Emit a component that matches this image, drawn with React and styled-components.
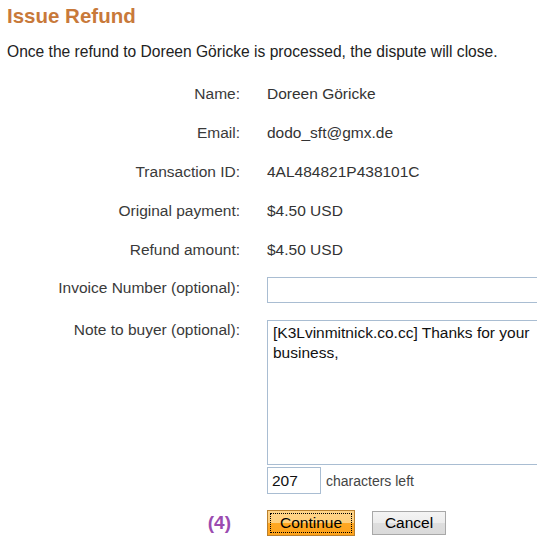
import React from "react";
import styled, { createGlobalStyle } from "styled-components";

const Global = createGlobalStyle`
  html, body { margin: 0; padding: 0; overflow: hidden; background: #fff; }
  body { font-family: "Liberation Sans", Arial, sans-serif; }
`;

const Page = styled.div`
  padding: 4px 7px 0 7px;
  width: 537px;
  box-sizing: border-box;
  overflow: hidden;
`;

const Title = styled.h1`
  margin: 0;
  font-size: 20.5px;
  line-height: 24px;
  font-weight: bold;
  color: #c8793a;
`;

const Intro = styled.p`
  margin: 14px 0 0 0;
  font-size: 15.6px;
  line-height: 20px;
  color: #222;
  white-space: nowrap;
`;

const Form = styled.div`
  margin-top: 22px;
  display: flex;
  flex-direction: column;
  gap: 19px;
`;

const Row = styled.div`
  display: grid;
  grid-template-columns: 233px minmax(0, 1fr);
  column-gap: 27px;
  align-items: start;
  margin-top: ${(p) => p.$shift || 0}px;
`;

const Label = styled.div`
  text-align: right;
  font-size: 15.5px;
  line-height: 20px;
  color: #3a3a3a;
  white-space: nowrap;
  padding-top: ${(p) => p.$pt || 0}px;
  padding-right: ${(p) => p.$pr || 0}px;
`;

const Value = styled.div`
  font-size: 15.5px;
  line-height: 20px;
  color: #333;
  white-space: nowrap;
`;

const Step = styled.span`
  font-size: 19px;
  font-weight: bold;
  color: #9b4bb0;
  line-height: 20px;
`;

const TextInput = styled.input`
  display: block;
  box-sizing: border-box;
  width: 310px;
  height: 26px;
  border: 1px solid #a9bdd2;
  padding: 2px 5px;
  font-family: inherit;
  font-size: 15.5px;
  outline: none;
`;

const Note = styled.textarea`
  display: block;
  box-sizing: border-box;
  width: 310px;
  height: 145px;
  border: 1px solid #a9bdd2;
  padding: 2px 5px;
  font-family: "Liberation Sans", Arial, sans-serif;
  font-size: 15.5px;
  line-height: 20px;
  color: #111;
  resize: none;
  outline: none;
  overflow: hidden;
`;

const CounterLine = styled.div`
  display: flex;
  align-items: center;
  gap: 5px;
  margin-top: 2px;
  height: 27px;
`;

const Counter = styled.input`
  box-sizing: border-box;
  width: 54px;
  height: 27px;
  border: 1px solid #a9bdd2;
  padding: 2px 4px;
  font-family: inherit;
  font-size: 15.5px;
  color: #111;
  outline: none;
`;

const Hint = styled.span`
  font-size: 14px;
  color: #444;
`;

const Buttons = styled.div`
  display: flex;
  align-items: center;
  gap: 17px;
`;

const Button = styled.button`
  box-sizing: border-box;
  font-family: "Liberation Sans", Arial, sans-serif;
  font-size: 15.5px;
  color: #000;
  padding: 0;
  cursor: pointer;
  ${(p) =>
    p.$primary
      ? `
    width: 88px;
    height: 26px;
    border: 1px solid #b9802e;
    background: linear-gradient(#ffd488 0%, #ffcf7c 50%, #ffa823 50%, #ffa31c 100%);
    outline: 1px dotted #000;
    outline-offset: -4px;
  `
      : `
    width: 74px;
    height: 24px;
    border: 1px solid #a8a8a8;
    background: linear-gradient(#f4f4f4 0%, #ececec 50%, #dedede 50%, #dadada 100%);
  `}
`;

export default function App() {
  return (
    <>
      <Global />
      <Page>
        <Title>Issue Refund</Title>
        <Intro>Once the refund to Doreen Göricke is processed, the dispute will close.</Intro>
        <Form>
          <Row>
            <Label>Name:</Label>
            <Value>Doreen Göricke</Value>
          </Row>
          <Row>
            <Label>Email:</Label>
            <Value>dodo_sft@gmx.de</Value>
          </Row>
          <Row>
            <Label>Transaction ID:</Label>
            <Value>4AL484821P438101C</Value>
          </Row>
          <Row>
            <Label>Original payment:</Label>
            <Value>$4.50 USD</Value>
          </Row>
          <Row>
            <Label>Refund amount:</Label>
            <Value>$4.50 USD</Value>
          </Row>
          <Row $shift={-2}>
            <Label $pt={1}>Invoice Number (optional):</Label>
            <TextInput type="text" defaultValue="" />
          </Row>
          <Row $shift={-2}>
            <Label>Note to buyer (optional):</Label>
            <div>
              <Note defaultValue="[K3Lvinmitnick.co.cc] Thanks for your business," />
              <CounterLine>
                <Counter type="text" defaultValue="207" />
                <Hint>characters left</Hint>
              </CounterLine>
            </div>
          </Row>
          <Row $shift={-3}>
            <Label $pr={9} $pt={3}>
              <Step>(4)</Step>
            </Label>
            <Buttons>
              <Button $primary>Continue</Button>
              <Button>Cancel</Button>
            </Buttons>
          </Row>
        </Form>
      </Page>
    </>
  );
}
